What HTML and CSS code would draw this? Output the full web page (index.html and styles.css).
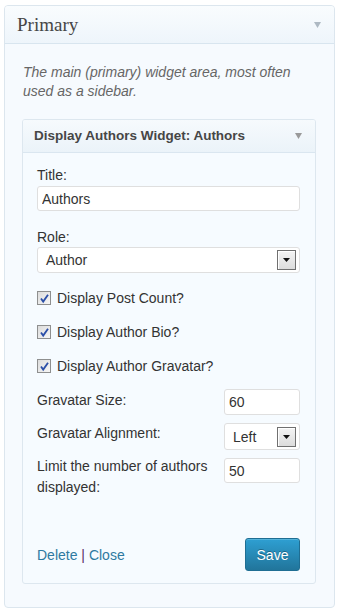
FILE: index.html
```html
<!DOCTYPE html>
<html lang="en">
<head>
<meta charset="utf-8">
<title>Primary widget area</title>
<link rel="stylesheet" href="styles.css">
</head>
<body>
<div class="sidebar">
  <div class="sidebar-head">
    <h3 class="sidebar-name">Primary</h3>
    <svg class="toggle" width="7" height="6" viewBox="0 0 7 6"><path d="M0 0H7L3.5 6Z" fill="#aeb9c3"/></svg>
  </div>
  <p class="sidebar-desc">The main (primary) widget area, most often used as a sidebar.</p>

  <div class="widget">
    <div class="widget-head">
      <h4 class="widget-title">Display Authors Widget: Authors</h4>
      <svg class="toggle" width="7" height="6" viewBox="0 0 7 6"><path d="M0 0H7L3.5 6Z" fill="#9a9a9a"/></svg>
    </div>
    <div class="widget-body">
      <div class="field">
        <label class="label">Title:</label>
        <input class="text-input" type="text" value="Authors">
      </div>
      <div class="field field-role">
        <label class="label">Role:</label>
        <div class="select select-wide">
          <span class="select-value">Author</span>
          <span class="select-btn"><svg width="7" height="4" viewBox="0 0 7 4"><path d="M0 0H7L3.5 4Z" fill="#111"/></svg></span>
        </div>
      </div>

      <div class="check-row first">
        <span class="check"><svg width="11" height="11" viewBox="0 0 11 11"><path d="M2 5.5L4.2 8.6L9 1.8" fill="none" stroke="#2b4fa8" stroke-width="1.8"/></svg></span>
        <span>Display Post Count?</span>
      </div>
      <div class="check-row">
        <span class="check"><svg width="11" height="11" viewBox="0 0 11 11"><path d="M2 5.5L4.2 8.6L9 1.8" fill="none" stroke="#2b4fa8" stroke-width="1.8"/></svg></span>
        <span>Display Author Bio?</span>
      </div>
      <div class="check-row">
        <span class="check"><svg width="11" height="11" viewBox="0 0 11 11"><path d="M2 5.5L4.2 8.6L9 1.8" fill="none" stroke="#2b4fa8" stroke-width="1.8"/></svg></span>
        <span>Display Author Gravatar?</span>
      </div>

      <div class="inline-row row-size">
        <label class="inline-label lbl-size">Gravatar Size:</label>
        <input class="text-input small" type="text" value="60">
      </div>
      <div class="inline-row row-align">
        <label class="inline-label lbl-align">Gravatar Alignment:</label>
        <div class="select small tall">
          <span class="select-value">Left</span>
          <span class="select-btn"><svg width="7" height="4" viewBox="0 0 7 4"><path d="M0 0H7L3.5 4Z" fill="#111"/></svg></span>
        </div>
      </div>
      <div class="inline-row row-limit">
        <label class="inline-label lbl-limit">Limit the number of authors displayed:</label>
        <input class="text-input small" type="text" value="50">
      </div>

      <div class="widget-foot">
        <div class="links"><a class="link">Delete</a> <span class="pipe">|</span> <a class="link">Close</a></div>
        <button class="save" type="button">Save</button>
      </div>
    </div>
  </div>
</div>
</body>
</html>
```

FILE: styles.css
```css
* { box-sizing: border-box; }

html, body {
  margin: 0;
  padding: 0;
  background: #ffffff;
}

body {
  font-family: "Liberation Sans", Arial, sans-serif;
  font-size: 14px;
  color: #333;
}

.sidebar {
  margin: 5px 5px 0 4px;
  border: 1px solid #dce6ee;
  border-radius: 4px;
  background: #f6fafe;
  padding-bottom: 23px;
}

.sidebar-head {
  height: 38px;
  display: flex;
  align-items: center;
  justify-content: space-between;
  padding: 0 13px 0 12px;
  border-bottom: 1px solid #d8e5ef;
  background: linear-gradient(#f9fcfe, #eef5fb);
  border-radius: 3px 3px 0 0;
}

.sidebar-name {
  margin: 0;
  font-family: "Liberation Serif", "Times New Roman", serif;
  font-weight: normal;
  font-size: 19px;
  line-height: 37px;
  color: #464646;
}

.toggle { display: block; }

.sidebar-desc {
  margin: 0;
  padding: 19px 18px 0 18px;
  font-style: italic;
  font-size: 14px;
  line-height: 19px;
  color: #666;
}

.widget {
  margin: 18px 18px 0 17px;
  border: 1px solid #dde7ef;
  border-radius: 3px;
  background: #f6fbff;
}

.widget-head {
  height: 33px;
  display: flex;
  align-items: center;
  justify-content: space-between;
  padding: 0 13px 0 11px;
  border-bottom: 1px solid #dae6f0;
  background: linear-gradient(#f6fafd, #ebf3f9);
  border-radius: 2px 2px 0 0;
}

.widget-title {
  margin: 0;
  font-size: 13.5px;
  font-weight: bold;
  line-height: 32px;
  color: #464646;
}

.widget-body {
  padding: 13px 15px 12px 14px;
}

.label {
  display: block;
  line-height: 18px;
}

.text-input {
  display: block;
  width: 100%;
  height: 25px;
  margin: 2px 0 0 0;
  padding: 0 4px;
  border: 1px solid #dfdfdf;
  border-radius: 3px;
  background: #fff;
  font-family: "Liberation Sans", Arial, sans-serif;
  font-size: 14px;
  color: #333;
  outline: none;
}

.field-role { margin-top: 17px; }

.select {
  display: flex;
  align-items: center;
  justify-content: space-between;
  height: 26px;
  padding: 0 3px 0 8px;
  border: 1px solid #dfdfdf;
  border-radius: 3px;
  background: #fff;
}

.select-wide { margin-top: 1px; }

.select-value { line-height: 18px; }

.select-btn {
  display: flex;
  align-items: center;
  justify-content: center;
  width: 19px;
  height: 20px;
  border: 1px solid #707070;
  background: linear-gradient(#f4f4f4, #dcdcdc);
  box-shadow: inset 1px 1px 0 #fff;
}

.check-row {
  display: flex;
  align-items: center;
  height: 18px;
  margin-top: 16px;
}

.check {
  display: flex;
  align-items: center;
  justify-content: center;
  width: 14px;
  height: 14px;
  margin-right: 6px;
  border: 1px solid #8e8f8f;
  background: linear-gradient(135deg, #dcdcdc, #f6f6f6);
}

.inline-row {
  display: flex;
  align-items: flex-start;
}

.inline-label {
  flex: 1;
  line-height: 18px;
}

.text-input.small,
.select.small {
  flex: 0 0 76px;
  width: 76px;
  margin: 0;
}

.text-input.small { height: 26px; }

.select.tall { height: 27px; }

.row-size { margin-top: 14px; }
.lbl-size { padding-top: 2px; }

.row-align { margin-top: 8px; }
.lbl-align { padding-top: 1px; }

.row-limit { margin-top: 8px; }
.row-limit .text-input.small { height: 25px; }
.lbl-limit {
  line-height: 21px;
  margin-top: -2px;
}

.widget-foot {
  display: flex;
  align-items: center;
  justify-content: space-between;
  margin-top: 40px;
}

.links { line-height: 18px; }

.link {
  color: #2e7aa1;
  text-decoration: none;
}

.pipe { color: #5a2f6a; }

.save {
  width: 55px;
  height: 33px;
  padding: 0;
  border: 1px solid #1f6e93;
  border-radius: 3px;
  background: linear-gradient(#2e9fd2, #21759b);
  box-shadow: inset 0 1px 0 rgba(120, 200, 230, 0.5);
  font-family: "Liberation Sans", Arial, sans-serif;
  font-size: 14px;
  color: #fff;
  text-shadow: 0 -1px 0 rgba(0, 0, 0, 0.3);
}
```
